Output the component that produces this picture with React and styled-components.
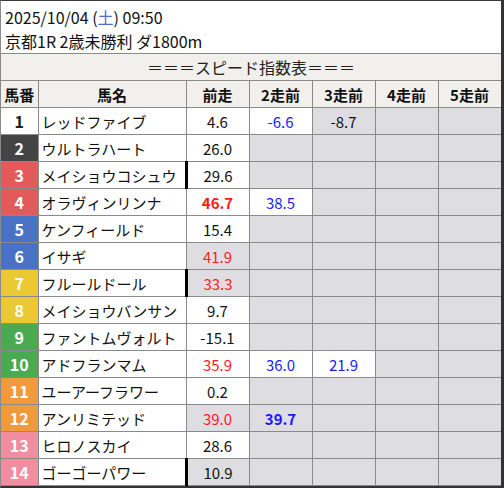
import React from "react";
import styled, { createGlobalStyle } from "styled-components";

const Global = createGlobalStyle`
  html, body { margin: 0; padding: 0; background: #fff; }
  body { font-family: "Noto Sans CJK JP", "Noto Sans", sans-serif; }
`;

const Frame = styled.div`
  width: 504px;
  height: 488px;
  box-sizing: border-box;
  border-top: 1px solid #3a3a3a;
  border-left: 1px solid #8a8a8a;
  border-right: 3px solid #333;
  border-bottom: 2px solid #333;
  margin-bottom: 2px;
  overflow: hidden;
  background: #fff;
`;

const Info = styled.div`
  padding: 4px 0 0 4px;
  height: 52px;
  box-sizing: border-box;
  font-size: 16px;
  line-height: 24px;
  color: #111;
`;

const Sat = styled.span`
  color: #4f6fc6;
`;

const Table = styled.table`
  border-collapse: collapse;
  table-layout: fixed;
  width: 500px;
  font-size: 15px;
  color: #111;
`;

const TitleCell = styled.th`
  height: 26px;
  padding: 0;
  background: #f1f0ec;
  border-top: 1px solid #8a8a8a;
  border-bottom: 1px solid #8a8a8a;
  font-weight: normal;
  font-size: 16px;
  text-align: center;
  color: #222;
`;

const HeadCell = styled.th`
  height: 26px;
  padding: 0;
  background: #f1f0ec;
  border: 1px solid #8a8a8a;
  border-left-width: ${(p) => (p.$first ? 0 : 1)}px;
  font-weight: bold;
  text-align: center;
`;

const NumCell = styled.td`
  height: 26px;
  padding: 0;
  border: 1px solid #8a8a8a;
  border-left: 0;
  background: ${(p) => p.$bg};
  color: ${(p) => p.$fg};
  font-weight: bold;
  font-size: 16px;
  text-align: center;
`;

const NameCell = styled.td`
  padding: 0 0 0 3px;
  border: 1px solid #8a8a8a;
  white-space: nowrap;
  overflow: hidden;
`;

const ValCell = styled.td`
  padding: 0;
  border: 1px solid #8a8a8a;
  border-left: ${(p) => (p.$mark ? "3px solid #000" : "1px solid #8a8a8a")};
  border-right: ${(p) => (p.$last ? 0 : "1px solid #8a8a8a")};
  background: ${(p) => (p.$grey ? "#dedee2" : "#fff")};
  color: ${(p) => p.$color || "#111"};
  font-weight: ${(p) => (p.$bold ? "bold" : "normal")};
  text-align: center;
`;

const waku = {
  1: ["#ffffff", "#222"],
  2: ["#444444", "#fff"],
  3: ["#e35a5a", "#fff"],
  4: ["#4a72c4", "#fff"],
  5: ["#eac932", "#fff"],
  6: ["#4aaa52", "#fff"],
  7: ["#f09a3c", "#fff"],
  8: ["#f08e9f", "#fff"],
};

const R = "#ff1a1a";
const B = "#1a1aff";

// each value: [text, color, bold, grey]
const rows = [
  { n: 1, w: 1, name: "レッドファイブ", v: [["4.6"], ["-6.6", B], ["-8.7", null, false, true], null, null] },
  { n: 2, w: 2, name: "ウルトラハート", v: [["26.0"], null, null, null, null] },
  { n: 3, w: 3, name: "メイショウコシュウ", mark: true, v: [["29.6"], null, null, null, null] },
  { n: 4, w: 3, name: "オラヴィンリンナ", v: [["46.7", R, true], ["38.5", B], null, null, null] },
  { n: 5, w: 4, name: "ケンフィールド", v: [["15.4"], null, null, null, null] },
  { n: 6, w: 4, name: "イサギ", v: [["41.9", R, false, true], null, null, null, null] },
  { n: 7, w: 5, name: "フルールドール", mark: true, v: [["33.3", R, false, true], null, null, null, null] },
  { n: 8, w: 5, name: "メイショウバンサン", v: [["9.7"], null, null, null, null] },
  { n: 9, w: 6, name: "ファントムヴォルト", v: [["-15.1"], null, null, null, null] },
  { n: 10, w: 6, name: "アドフランマム", v: [["35.9", R], ["36.0", B], ["21.9", B], null, null] },
  { n: 11, w: 7, name: "ユーアーフラワー", v: [["0.2"], null, null, null, null] },
  { n: 12, w: 7, name: "アンリミテッド", v: [["39.0", R, false, true], ["39.7", B, true, true], null, null, null] },
  { n: 13, w: 8, name: "ヒロノスカイ", v: [["28.6"], null, null, null, null] },
  { n: 14, w: 8, name: "ゴーゴーパワー", mark: true, v: [["10.9", null, false, true], null, null, null, null] },
];

export default function App() {
  return (
    <>
      <Global />
      <Frame>
        <Info>
          <div>
            2025/10/04 (<Sat>土</Sat>) 09:50
          </div>
          <div>京都1R 2歳未勝利 ダ1800m</div>
        </Info>
        <Table>
          <colgroup>
            <col style={{ width: 37 }} />
            <col style={{ width: 148 }} />
            <col style={{ width: 63 }} />
            <col style={{ width: 63 }} />
            <col style={{ width: 63 }} />
            <col style={{ width: 63 }} />
            <col style={{ width: 63 }} />
          </colgroup>
          <thead>
            <tr>
              <TitleCell colSpan={7}>＝＝＝スピード指数表＝＝＝</TitleCell>
            </tr>
            <tr>
              <HeadCell $first>馬番</HeadCell>
              <HeadCell>馬名</HeadCell>
              <HeadCell>前走</HeadCell>
              <HeadCell>2走前</HeadCell>
              <HeadCell>3走前</HeadCell>
              <HeadCell>4走前</HeadCell>
              <HeadCell>5走前</HeadCell>
            </tr>
          </thead>
          <tbody>
            {rows.map((r) => (
              <tr key={r.n}>
                <NumCell $bg={waku[r.w][0]} $fg={waku[r.w][1]}>
                  {r.n}
                </NumCell>
                <NameCell>{r.name}</NameCell>
                {r.v.map((v, i) => {
                  const grey = v ? !!v[3] : true;
                  return (
                    <ValCell
                      key={i}
                      $grey={grey}
                      $color={v && v[1]}
                      $bold={v && v[2]}
                      $mark={i === 0 && r.mark}
                      $last={i === 4}
                    >
                      {v ? v[0] : ""}
                    </ValCell>
                  );
                })}
              </tr>
            ))}
          </tbody>
        </Table>
      </Frame>
    </>
  );
}
